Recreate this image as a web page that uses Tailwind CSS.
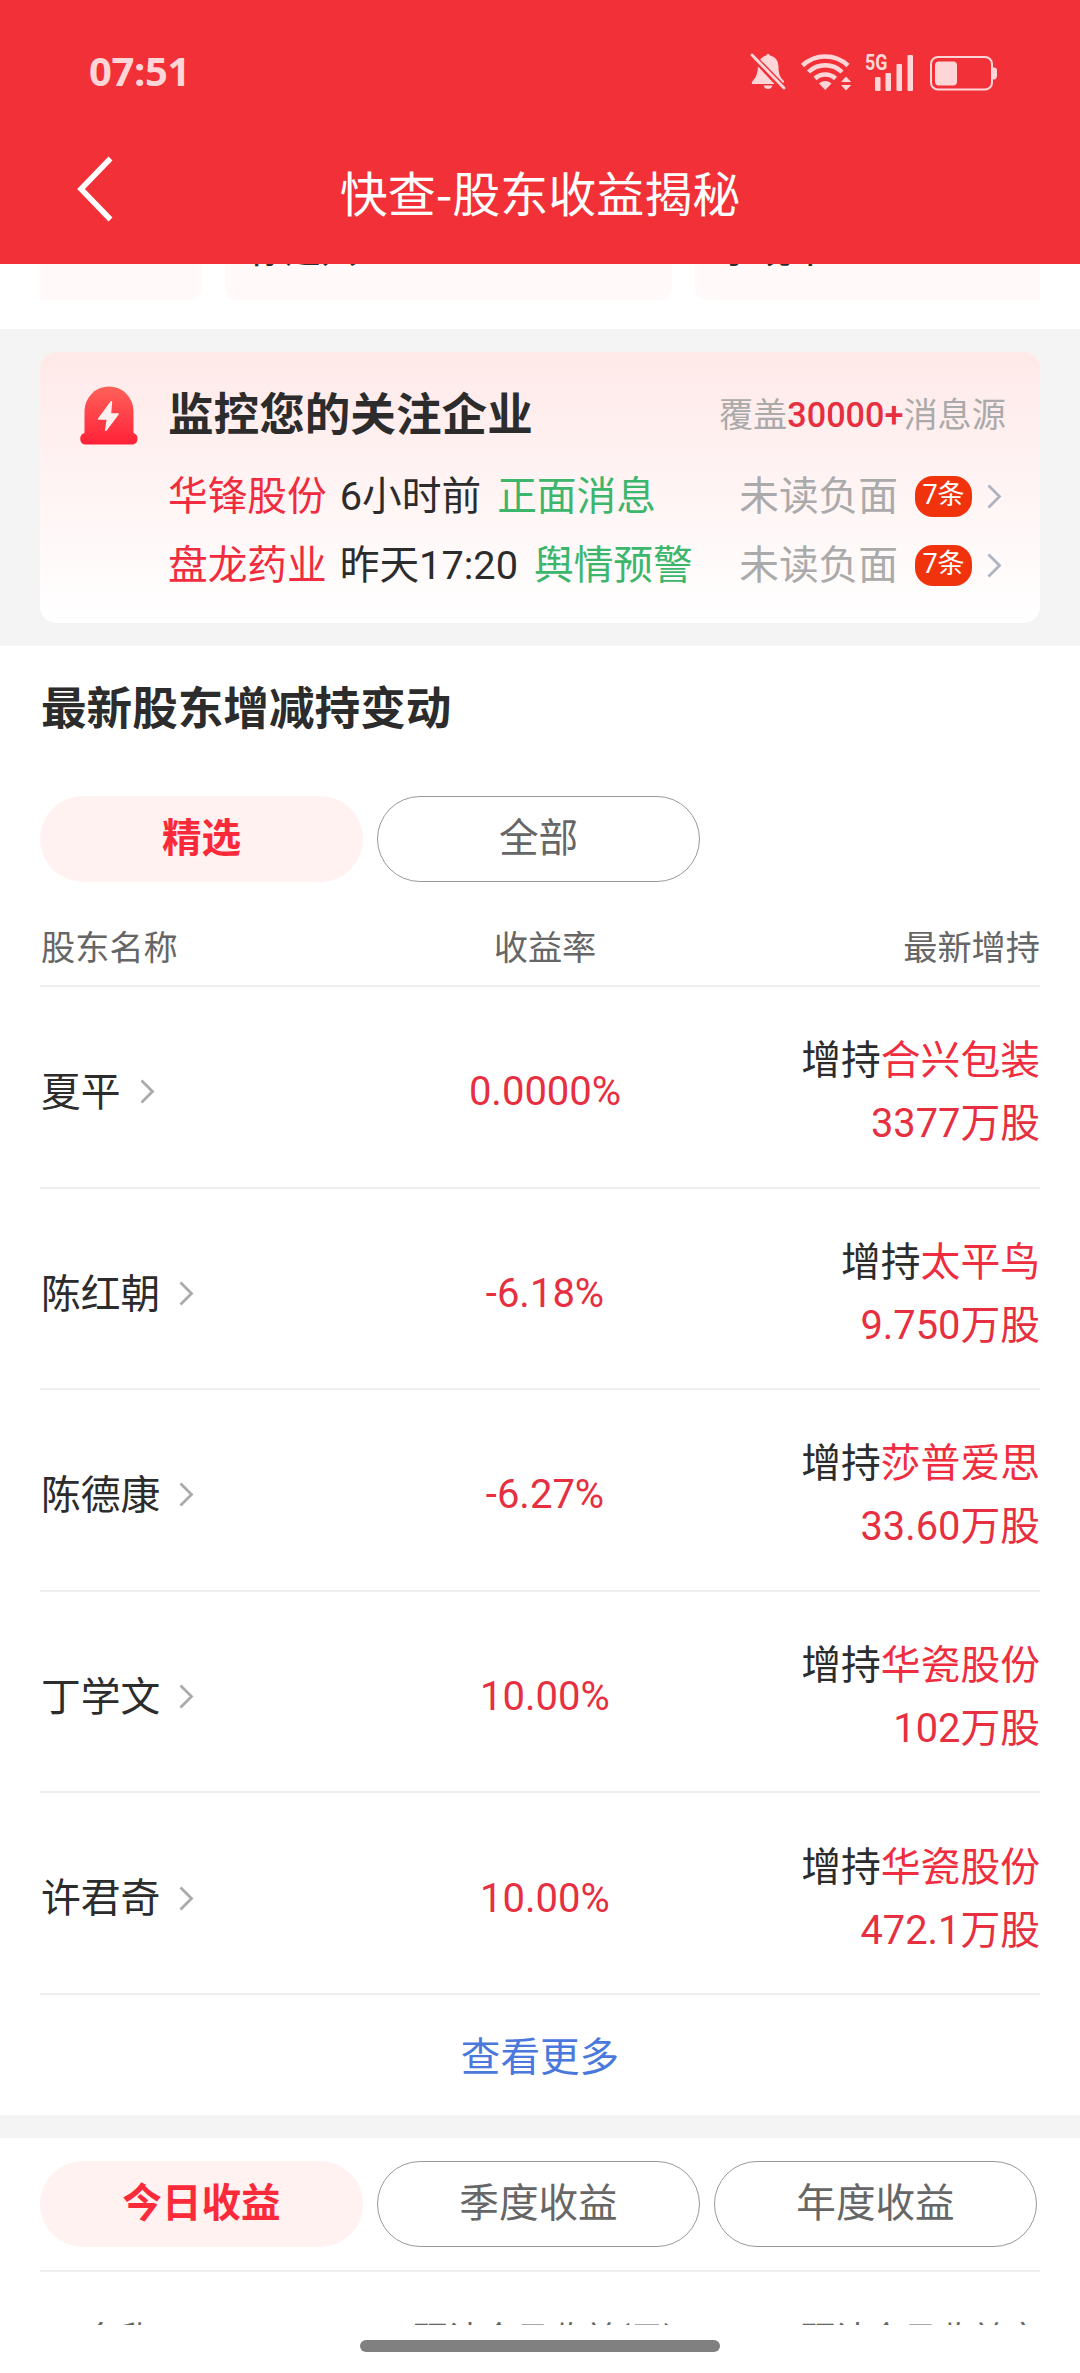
<!DOCTYPE html>
<html lang="zh-CN">
<head>
  <meta charset="UTF-8" />
  <meta name="viewport" content="width=device-width, initial-scale=1.0" />
  <title>快查-股东收益揭秘</title>
  <script src="https://cdn.jsdelivr.net/npm/@tailwindcss/browser@4"></script>
</head>
<body class="bg-white">
  <div class="relative w-[1080px] h-[2373px] overflow-hidden flex flex-col bg-white text-[#2c2c2c] font-[Roboto,'Noto_Sans_CJK_SC',sans-serif]">

    <!-- 顶部 -->
    <header class="h-[264px] shrink-0 bg-[#f23038]">
      <div class="h-[144px] pl-[89px] pr-[83px] flex items-center justify-between text-[#ffd6d8]">
        <span class="-mt-[2px] text-[40px] leading-[48px] font-bold tracking-[-0.4px] font-['Open_Sans',sans-serif]">07:51</span>
        <div class="flex items-center">
          <svg class="w-[36px] h-[38px]" viewBox="0 0 36 38" fill="currentColor">
            <path d="M8 13.5 24.5 31H3c-1.4 0-1.6-1.8-.6-2.800C6 24.500 7.500 21 8 13.500Z"/>
            <path d="M10.200 6.500C12 4.200 14 3.200 16.300 2.600c.3-2 3.300-2 3.600 0C26 4 28.500 8.500 28.500 14c0 6.500 1.500 10.500 5 13.500.7.7.6 2-.2 2.800Z"/>
            <path d="M13.500 32.500h9c-.8 2.400-2.400 3.500-4.500 3.500s-3.700-1.100-4.500-3.500Z"/>
            <path d="M2 2 34 35" fill="none" stroke="currentColor" stroke-width="2.800" stroke-linecap="round"/>
          </svg>
          <svg class="ml-[14px] w-[52px] h-[38px]" viewBox="0 0 52 38" fill="none" stroke="currentColor" stroke-width="4.500">
            <path d="M2.500 12.500a33 33 0 0 1 45.500 0"/>
            <path d="M8.500 19a24 24 0 0 1 33.500 0"/>
            <path d="M15 25.500a15 15 0 0 1 20.500 0"/>
            <path d="M19 30.500c3-3.400 9.500-3.400 12.500 0L25.200 37Z" fill="currentColor" stroke="none"/>
            <path d="M46 23.500 51.200 29H41ZM46 37.500 51.200 32H41Z" fill="currentColor" stroke="none"/>
          </svg>
          <svg class="ml-[13px] w-[48px] h-[38px] overflow-visible" viewBox="0 0 48 38" fill="currentColor">
            <text x="0" y="16.500" font-family="Roboto, sans-serif" font-weight="700" font-size="22" textLength="22.500" lengthAdjust="spacingAndGlyphs">5G</text>
            <rect x="10" y="24" width="5.500" height="14" rx="1"/>
            <rect x="20.500" y="20" width="5.500" height="18" rx="1"/>
            <rect x="31.500" y="11" width="5.500" height="27" rx="1"/>
            <rect x="42.500" y="2" width="5.500" height="36" rx="1"/>
          </svg>
          <svg class="ml-[17px] w-[67px] h-[38px]" viewBox="0 0 67 38" fill="currentColor">
            <rect x="1" y="4" width="61" height="32.500" rx="7" fill="none" stroke="currentColor" stroke-width="2"/>
            <rect x="5" y="8.500" width="22" height="24" rx="4"/>
            <path d="M62 14.500h2c2 0 3 1 3 3v5c0 2-1 4-3 4h-2Z"/>
          </svg>
        </div>
      </div>
      <div class="h-[101px] px-[77px] grid grid-cols-[36px_1fr_36px] items-center text-white">
        <svg class="w-[36px] h-[66px] -mt-[11px]" viewBox="0 0 36 66" fill="none" stroke="currentColor" stroke-width="5.500"><path d="M33.500 2.500 4 33l29.500 30.500"/></svg>
        <h1 class="-mt-[8px] text-center text-[48px] leading-[60px] font-['Noto_Sans_CJK_SC',sans-serif]">快查-股东收益揭秘</h1>
      </div>
    </header>

    <!-- 滚动到顶部下方的卡片 -->
    <section class="h-[65px] shrink-0 px-[40px] flex gap-[23px] text-[36px] font-medium">
      <div class="w-[162px] h-[36px] rounded-br-xl bg-[#fff9f9]"></div>
      <div class="w-[447px] h-[36px] rounded-b-xl bg-[#fff9f9] overflow-hidden pl-6"><p class="-mt-[38px] leading-[50px]">徐建兴</p></div>
      <div class="w-[345px] h-[36px] rounded-bl-xl bg-[#fff9f9] overflow-hidden pl-6"><p class="-mt-[38px] leading-[50px]">李晓军</p></div>
    </section>

    <!-- 监控 -->
    <section class="h-[317px] shrink-0 bg-[#f4f4f4] px-[40px] pt-[23px]">
      <div class="h-[271px] rounded-2xl bg-linear-to-b from-[#ffe9e9] to-white pl-[38px] pr-[34px] pt-[28px] flex">
        <svg class="mt-[6px] w-[62px] h-[60px] shrink-0" viewBox="0 0 62 60">
          <defs><linearGradient id="alarm" x1="0" y1="0" x2="0" y2="1"><stop offset="0" stop-color="#ff6259"/><stop offset="1" stop-color="#ff2138"/></linearGradient></defs>
          <path d="M6.500 47V25a24.500 24.500 0 0 1 49 0v22a6 6 0 0 1-.5 11.500H6.500a6 6 0 0 1 0-11.500Z" fill="url(#alarm)"/>
          <path d="M32.500 15.500 20 32.500c-.4.600 0 1.200.7 1.200h7.800L27 44c-.2 1.200 1 1.500 1.700.6L40.700 28.500c.5-.7.100-1.300-.7-1.300h-6.800l1-11c.1-1.100-1-1.500-1.700-.7Z" fill="#fff0f0"/>
        </svg>
        <div class="ml-[28px] flex-1">
          <div class="h-[68px] flex items-center justify-between">
            <h2 class="pt-[4px] text-[45.600px] leading-[68px] font-bold">监控您的关注企业</h2>
            <p class="pt-[1px] text-[34.200px] leading-[68px] text-[#aaa]">覆盖<span class="text-[#e62f40] font-medium">30000+</span>消息源</p>
          </div>
          <div id="news" class="text-[39.700px] pt-[12px]"></div>
        </div>
      </div>
    </section>

    <!-- 最新股东增减持变动 -->
    <section class="h-[1469px] shrink-0 px-[40px] flex flex-col">
      <h2 class="pt-[30px] pl-px text-[45.600px] leading-[68px] font-bold">最新股东增减持变动</h2>
      <div class="mt-[52px] flex gap-[14px] text-[39.600px]">
        <button class="w-[323px] h-[86px] rounded-full bg-[#fff2f0] text-[#fb2a3b] font-bold">精选</button>
        <button class="w-[323px] h-[86px] rounded-full border border-[#999] text-[#666]">全部</button>
      </div>
      <div class="h-[105px] pt-[27px] pl-px grid grid-cols-[330px_348px_1fr] text-[34.200px] leading-[78px] text-[#666] border-b-2 border-[#efefef]">
        <span>股东名称</span><span class="text-center">收益率</span><span class="text-right">最新增持</span>
      </div>
      <div id="holders"></div>
      <a class="flex-1 pt-[6px] flex items-center justify-center text-[39.600px] text-[#4b78dc]">查看更多</a>
    </section>

    <div class="h-[23px] shrink-0 bg-[#f4f4f4]"></div>

    <!-- 收益 -->
    <section class="h-[187px] shrink-0 overflow-hidden px-[40px] pt-[23px]">
      <div class="flex gap-[14px] text-[39.600px]">
        <button class="w-[323px] h-[86px] rounded-full bg-[#fff2f0] text-[#fb2a3b] font-bold">今日收益</button>
        <button class="w-[323px] h-[86px] rounded-full border border-[#999] text-[#666]">季度收益</button>
        <button class="w-[323px] h-[86px] rounded-full border border-[#999] text-[#666]">年度收益</button>
      </div>
      <div class="mt-[23px] pt-[37px] border-t-2 border-[#efefef] grid grid-cols-[160px_1fr_340px] text-[34.200px] leading-[60px] text-[#666] whitespace-nowrap">
        <span class="pl-px text-center">名称</span><span class="pl-[213px]">预计今日收益(元)</span><span class="text-right">预计今日收益率</span>
      </div>
    </section>

    <div class="mt-[15px] w-[360px] h-[12px] shrink-0 self-center rounded-full bg-[#808080]"></div>
  </div>

  <script>
    const news = [
      { name: '华锋股份', time: '6小时前', tag: '正面消息', count: 7 },
      { name: '盘龙药业', time: '昨天17:20', tag: '舆情预警', count: 7 },
    ];
    const holders = [
      { name: '夏平', rate: '0.0000%', stock: '合兴包装', amount: '3377万股' },
      { name: '陈红朝', rate: '-6.18%', stock: '太平鸟', amount: '9.750万股' },
      { name: '陈德康', rate: '-6.27%', stock: '莎普爱思', amount: '33.60万股' },
      { name: '丁学文', rate: '10.00%', stock: '华瓷股份', amount: '102万股' },
      { name: '许君奇', rate: '10.00%', stock: '华瓷股份', amount: '472.1万股' },
    ];
    const arrow = '<path d="M1.500 1.500 12.500 12.500 1.500 23.500" fill="none" stroke="currentColor" stroke-width="2.800"/>';

    document.getElementById('news').innerHTML = news.map(n => `
      <div class="h-[69px] pt-[4px] pr-[4px] flex items-center whitespace-nowrap">
        <span class="text-[#f02c3f]">${n.name}</span>
        <span class="ml-[13px]">${n.time}</span>
        <span class="ml-[16px] text-[#3bb66b]">${n.tag}</span>
        <span class="ml-auto text-[#aaa]">未读负面</span>
        <span class="ml-[17px] w-[57px] h-[41px] rounded-[18px] bg-[#f1330d] text-white text-[27px] leading-[39px] text-center">${n.count}条</span>
        <svg class="ml-[15px] w-[15px] h-[25px] text-[#adb3bf]" viewBox="0 0 15 25">${arrow}</svg>
      </div>`).join('');

    document.getElementById('holders').innerHTML = holders.map(h => `
      <div class="h-[201.600px] grid grid-cols-[330px_348px_1fr] items-center border-b-2 border-[#efefef] text-[39.800px]">
        <div class="pt-[12px] pl-px flex items-center">${h.name}<svg class="-mt-[2px] ml-[19px] w-[15px] h-[25px] text-[#aaa]" viewBox="0 0 15 25">${arrow}</svg></div>
        <div class="pt-[11px] pl-[2px] text-center text-[40px] text-[#e62f40]">${h.rate}</div>
        <div class="pt-[11px] text-right leading-[63px]">增持<span class="text-[#f02c3f]">${h.stock}</span><br><span class="text-[#e62f40]">${h.amount}</span></div>
      </div>`).join('');
  </script>
</body>
</html>
